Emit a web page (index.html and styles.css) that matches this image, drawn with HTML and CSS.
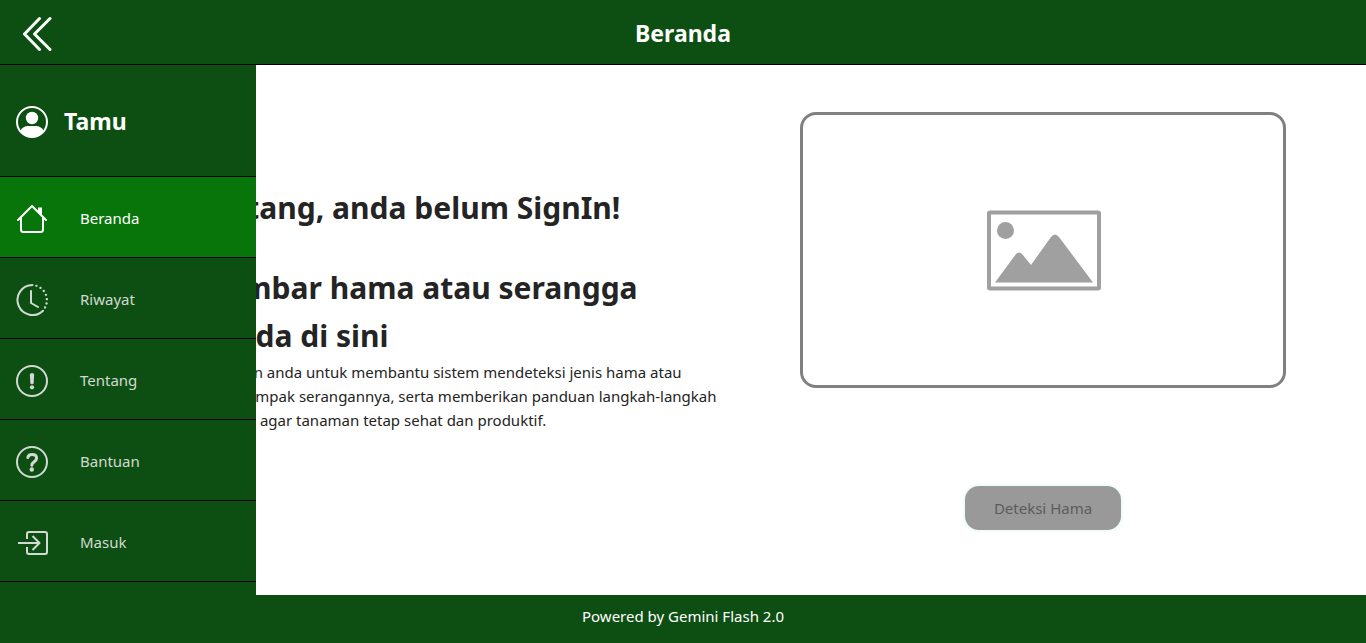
FILE: index.html
```html
<!DOCTYPE html>
<html lang="id">
<head>
<meta charset="utf-8">
<meta name="viewport" content="width=device-width, initial-scale=1">
<title>Beranda</title>
<link rel="stylesheet" href="styles.css">
</head>
<body>
<header class="topbar">
  <button class="toggle" type="button" aria-label="Tutup menu">
    <svg width="32" height="36" viewBox="0 0 32 36" fill="none" stroke="currentColor" stroke-width="3" stroke-linecap="round" stroke-linejoin="round"><path d="M16.500 3.500 1.500 19 16.500 34.500M27 3.500 11.500 19 27 34.500"/></svg>
  </button>
  <h1 class="title">Beranda</h1>
</header>
<div class="body">
  <main class="content">
    <section class="intro">
      <h2 class="headline">Selamat datang, anda belum SignIn!</h2>
      <h2 class="headline">Unggah gambar hama atau serangga<br>di kebun anda di sini</h2>
      <p class="lead">Unggah gambar tanaman anda untuk membantu sistem mendeteksi jenis hama atau<br>serangga kebun serta dampak serangannya, serta memberikan panduan langkah-langkah<br>penanganan yang sesuai agar tanaman tetap sehat dan produktif.</p>
    </section>
    <section class="upload">
      <button class="dropzone" type="button" aria-label="Pilih gambar">
        <svg width="116" height="82" viewBox="0 0 116 82"><rect x="4" y="3.500" width="110" height="76" rx="1" fill="none" stroke="#a0a0a0" stroke-width="4"/><circle cx="20.500" cy="21.500" r="8.500" fill="#a0a0a0"/><path d="M10 73.500 31 45Q34 42 37 45L46 56 66 28Q70 23 74 28L108 73.500Z" fill="#a0a0a0"/></svg>
      </button>
      <button class="detect" type="button" disabled>Deteksi Hama</button>
    </section>
  </main>
  <aside class="sidebar">
    <div class="profile">
      <svg width="32" height="32" viewBox="0 0 32 32"><circle cx="16" cy="16" r="15" fill="none" stroke="currentColor" stroke-width="2"/><circle cx="16" cy="12" r="6.200" fill="currentColor"/><path d="M4 25C6 21.500 9 20 12 20h8c3 0 6 1.500 8 5A15.500 15.500 0 0 1 16 31.500 15.500 15.500 0 0 1 4 25Z" fill="currentColor"/></svg>
      <span class="name">Tamu</span>
    </div>
    <nav class="menu">
      <a class="item active" href="#beranda">
        <svg width="32" height="32" viewBox="0 0 32 32" fill="none" stroke="currentColor" stroke-width="2" stroke-linecap="round" stroke-linejoin="round"><path d="M2 17 16 3 30 17M5 15v11.500Q5 29 7.500 29H24.500Q27 29 27 26.500V15"/><path d="M22 4.500h4v8.500l-4-4Z" fill="currentColor" stroke="none"/></svg>
        <span class="label">Beranda</span>
      </a>
      <a class="item" href="#riwayat">
        <svg width="32" height="32" viewBox="0 0 32 32" fill="none" stroke="currentColor" stroke-width="2" stroke-linecap="round" stroke-linejoin="round"><path d="M16.500 1A15 15 0 1 0 27 26.700M15 7v12l7 4"/><path d="M20.400 1.800h.1M24.400 3.900h.1M27.700 7h.1M29.900 10.800h.1M30.800 15.200h.1M30.500 19.500h.1M29 23.500h.1" stroke-width="2.300"/></svg>
        <span class="label">Riwayat</span>
      </a>
      <a class="item" href="#tentang">
        <svg width="32" height="32" viewBox="0 0 32 32"><circle cx="16" cy="16" r="15" fill="none" stroke="currentColor" stroke-width="2"/><path d="M13.900 9.500q0-1.500 2.100-1.500t2.100 1.500l-.4 8.500q-.1 1.200-1.700 1.200t-1.700-1.200Z" fill="currentColor"/><circle cx="16" cy="22.300" r="2.100" fill="currentColor"/></svg>
        <span class="label">Tentang</span>
      </a>
      <a class="item" href="#bantuan">
        <svg width="32" height="32" viewBox="0 0 32 32" fill="none" stroke="currentColor"><circle cx="16" cy="16" r="15" stroke-width="2"/><path d="M11.800 11.500C12.200 9.500 13.800 8.400 16 8.400c2.700 0 4.600 1.400 4.600 3.800 0 3.500-4.800 3.500-4.800 7" stroke-width="3" stroke-linecap="round"/><circle cx="15.800" cy="23.500" r="2.200" fill="currentColor" stroke="none"/></svg>
        <span class="label">Bantuan</span>
      </a>
      <a class="item" href="#masuk">
        <svg width="32" height="32" viewBox="0 0 32 32" fill="none" stroke="currentColor" stroke-width="2" stroke-linejoin="round"><path d="M11 12V7q0-2 2-2H29q2 0 2 2V25q0 2-2 2H13q-2 0-2-2V20"/><path d="M2 16H23M16.500 9 23.500 16 16.500 23"/></svg>
        <span class="label">Masuk</span>
      </a>
    </nav>
  </aside>
</div>
<footer class="footer">Powered by Gemini Flash 2.0</footer>
</body>
</html>
```
FILE: styles.css
```css
* {
  box-sizing: border-box;
}

body {
  margin: 0;
  min-height: 100vh;
  display: flex;
  flex-direction: column;
  background: #fff;
  color: #242424;
  font-family: "Noto Sans", "Open Sans", sans-serif;
  font-size: 15px;
  line-height: 24px;
}

svg {
  display: block;
  flex: none;
}

button {
  font: inherit;
}

.topbar {
  display: grid;
  grid-template-columns: 64px 1fr 64px;
  align-items: center;
  height: 65px;
  padding: 2px 8px 0;
  border-bottom: 1px solid #000;
  background: #0d4f12;
  color: #fff;
}

.toggle {
  justify-self: start;
  padding: 0 0 0 15px;
  border: 0;
  background: none;
  color: inherit;
  cursor: pointer;
}

.title {
  margin: 0;
  font-size: 23px;
  line-height: 32px;
  text-align: center;
}

.body {
  flex: 1;
  display: grid;
  grid-template-columns: 256px 1fr;
}

.content {
  grid-area: 1 / 1 / 2 / 3;
  display: grid;
  grid-template-columns: 640px 1fr;
  column-gap: 80px;
  padding: 47px 80px 63px;
}

.intro {
  padding-top: 72px;
  white-space: nowrap;
}

.headline {
  margin: 0 0 32px;
  font-size: 30px;
  line-height: 48px;
}

.headline + .headline {
  margin: 0;
}

.lead {
  margin: 0;
}

.upload {
  display: flex;
  flex-direction: column;
  align-items: center;
  justify-content: space-between;
}

.dropzone {
  display: grid;
  place-items: center;
  width: 100%;
  height: 276px;
  border: 3px solid #808080;
  border-radius: 16px;
  background: #fff;
  cursor: pointer;
}

.detect {
  width: 160px;
  height: 48px;
  border: 2px solid #effdfa;
  border-radius: 16px;
  background: #999;
  color: #5c5c5c;
}

.sidebar {
  grid-area: 1 / 1 / 2 / 2;
  z-index: 1;
  background: #0d4f12;
  color: #fff;
}

.profile {
  display: flex;
  align-items: center;
  gap: 16px;
  height: 112px;
  padding: 2px 16px 0;
  border-bottom: 1px solid #000;
}

.name {
  padding-bottom: 2px;
  font-size: 23px;
  font-weight: 700;
}

.item {
  display: flex;
  align-items: center;
  gap: 32px;
  height: 81px;
  padding: 4px 16px 0;
  border-bottom: 1px solid #000;
  color: #d3d9d3;
  text-decoration: none;
}

.label {
  padding-bottom: 2px;
}

.active {
  background: #08750a;
  color: #fff;
}

.footer {
  height: 48px;
  padding: 9px 16px;
  background: #0d4f12;
  color: #fff;
  text-align: center;
}
```
